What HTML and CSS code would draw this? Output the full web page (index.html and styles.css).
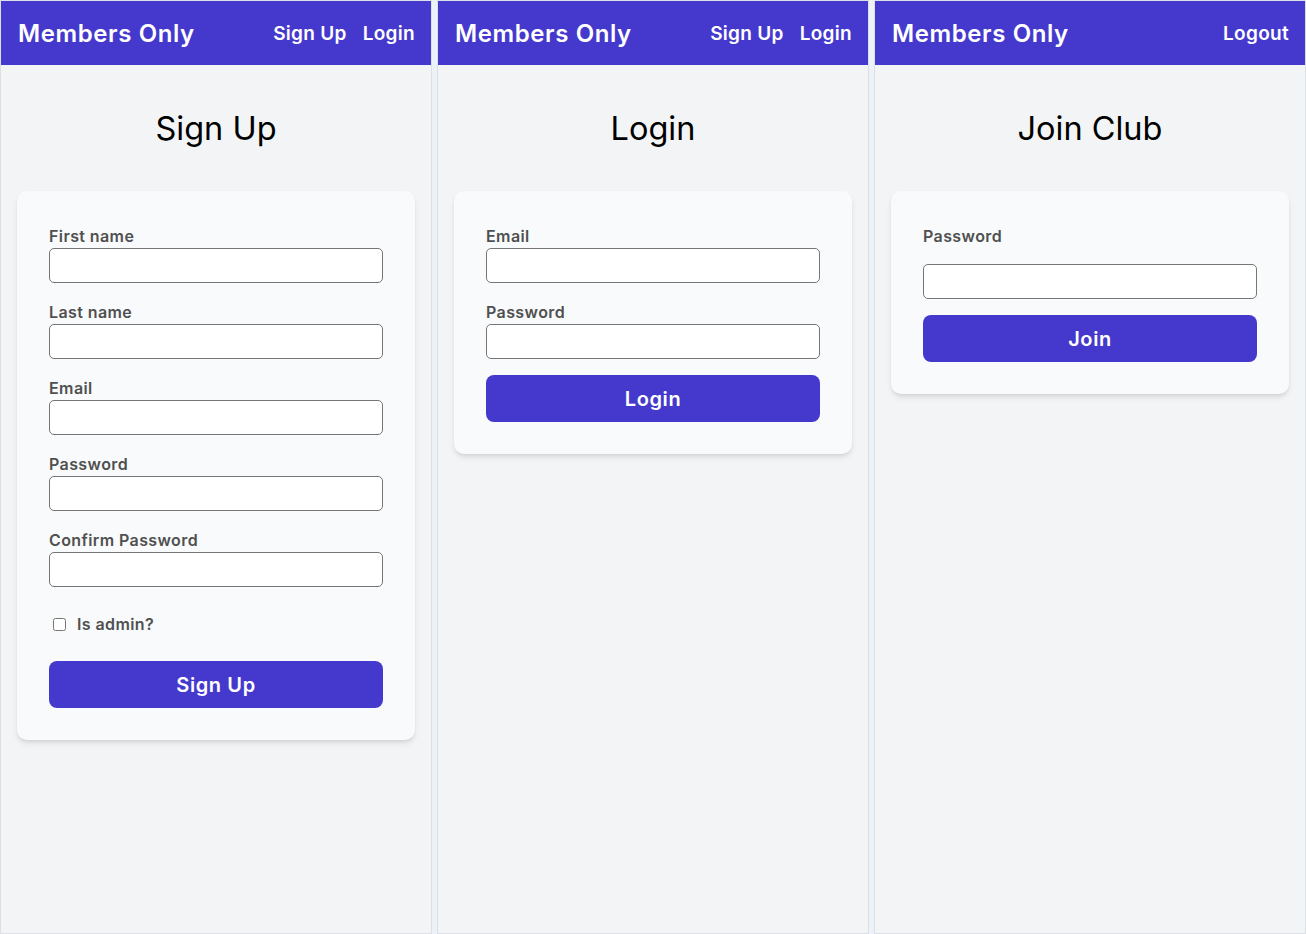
FILE: index.html
```html
<!DOCTYPE html>
<html lang="en">
<head>
<meta charset="utf-8">
<title>Members Only</title>
<link rel="stylesheet" href="styles.css">
</head>
<body>
<div class="screens">
  <section class="panel">
    <header class="topbar">
      <a class="brand" href="#">Members Only</a>
      <nav class="nav"><a href="#">Sign Up</a><a href="#">Login</a></nav>
    </header>
    <main class="content">
      <h1 class="title">Sign Up</h1>
      <form class="card">
        <div class="field"><label class="label">First name</label><input class="input" type="text"></div>
        <div class="field"><label class="label">Last name</label><input class="input" type="text"></div>
        <div class="field"><label class="label">Email</label><input class="input" type="email"></div>
        <div class="field"><label class="label">Password</label><input class="input" type="password"></div>
        <div class="field"><label class="label">Confirm Password</label><input class="input" type="password"></div>
        <div class="check-row"><input class="checkbox" type="checkbox"><label class="label check-label">Is admin?</label></div>
        <button class="btn btn-signup" type="button">Sign Up</button>
      </form>
    </main>
  </section>
  <section class="panel">
    <header class="topbar">
      <a class="brand" href="#">Members Only</a>
      <nav class="nav"><a href="#">Sign Up</a><a href="#">Login</a></nav>
    </header>
    <main class="content">
      <h1 class="title">Login</h1>
      <form class="card">
        <div class="field"><label class="label">Email</label><input class="input" type="email"></div>
        <div class="field"><label class="label">Password</label><input class="input" type="password"></div>
        <button class="btn" type="button">Login</button>
      </form>
    </main>
  </section>
  <section class="panel">
    <header class="topbar">
      <a class="brand" href="#">Members Only</a>
      <nav class="nav"><a href="#">Logout</a></nav>
    </header>
    <main class="content">
      <h1 class="title">Join Club</h1>
      <form class="card">
        <div class="field field-spaced"><label class="label">Password</label><input class="input" type="password"></div>
        <button class="btn" type="button">Join</button>
      </form>
    </main>
  </section>
</div>
</body>
</html>
```
FILE: styles.css
```css
* { box-sizing: border-box; }
html, body { margin: 0; padding: 0; }
body {
  background: #edf1f8;
  font-family: "Inter", "Open Sans", sans-serif;
}
.screens {
  display: flex;
  gap: 5px;
  height: 934px;
}
.panel {
  width: 432px;
  height: 934px;
  border: 1px solid #dcdfe5;
  background: #f3f4f6;
  display: flex;
  flex-direction: column;
}
.topbar {
  height: 64px;
  background: #4539cd;
  display: flex;
  align-items: center;
  justify-content: space-between;
  padding: 0 16px 0 17px;
}
.brand {
  color: #fff;
  text-decoration: none;
  font-size: 24px;
  font-weight: 600;
  letter-spacing: 0.6px;
}
.nav {
  display: flex;
  gap: 16px;
}
.nav a {
  color: #fff;
  text-decoration: none;
  font-size: 19px;
  font-weight: 600;
  letter-spacing: 0.3px;
}
.content {
  padding: 44px 16px 0;
}
.title {
  margin: 0 0 42px;
  text-align: center;
  font-size: 32.5px;
  line-height: 40px;
  font-weight: 400;
  color: #000;
}
.card {
  background: #f9fafb;
  border-radius: 10px;
  padding: 33px 32px 32px;
  box-shadow: 0 4px 6px -1px rgba(0,0,0,0.1), 0 2px 4px -2px rgba(0,0,0,0.1);
}
.field {
  display: flex;
  flex-direction: column;
}
.field + .field { margin-top: 17px; }
.field-spaced .input { margin-top: 16px; }
.label {
  font-size: 16px;
  line-height: 24px;
  font-weight: 600;
  letter-spacing: 0.4px;
  color: #505050;
}
.input {
  height: 35px;
  margin: 0;
  border: 1px solid #767676;
  border-radius: 5px;
  background: #fff;
  font: inherit;
}
.check-row {
  display: flex;
  align-items: center;
  height: 24px;
  margin-top: 25px;
}
.checkbox {
  width: 13px;
  height: 13px;
  margin: 0 0 0 4px;
}
.check-label { margin-left: 11px; }
.btn {
  display: block;
  width: 100%;
  height: 47px;
  margin-top: 16px;
  border: none;
  border-radius: 8px;
  background: #4539cd;
  color: #fff;
  font-family: inherit;
  font-size: 20px;
  font-weight: 600;
  letter-spacing: 0.6px;
}
.btn-signup { margin-top: 25px; }
```
